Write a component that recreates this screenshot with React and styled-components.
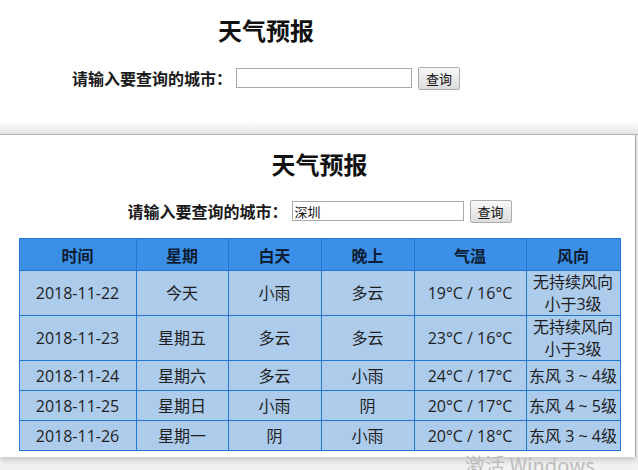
import React from "react";
import styled, { createGlobalStyle } from "styled-components";

const Global = createGlobalStyle`
  html, body { margin: 0; padding: 0; }
  body {
    background: #f1f1f1;
    font-family: "Noto Sans CJK SC", "Noto Sans", sans-serif;
    width: 638px;
    height: 470px;
    overflow: hidden;
    position: relative;
  }
`;

const TopWindow = styled.section`
  height: 135px;
  box-sizing: border-box;
  background: linear-gradient(to bottom, #ffffff 0, #ffffff 122px, #e4e4e4 134px);
  border-bottom: 1px solid #b9b9b9;
  padding-top: 14px;
`;

const TopInner = styled.div`
  width: 532px;
  display: flex;
  flex-direction: column;
  align-items: center;
  gap: 20px;
`;

const BottomWindow = styled.section`
  width: 636px;
  height: 322px;
  box-sizing: border-box;
  background: #ffffff;
  border-right: 1px solid #a8a8a8;
  box-shadow: 0 3px 6px rgba(0, 0, 0, 0.18);
  padding: 13px 0 0 4px;
  display: flex;
  flex-direction: column;
  align-items: center;
`;

const Title = styled.h1`
  margin: 0;
  font-size: 24px;
  line-height: 32px;
  font-weight: 700;
  color: #111;
  font-family: "Noto Sans CJK SC", sans-serif;
`;

const SearchRow = styled.form`
  display: flex;
  align-items: center;
  height: 24px;
  margin-top: ${(p) => p.$top || 0}px;
`;

const Label = styled.label`
  font-size: 16px;
  font-weight: 700;
  color: #1a1a1a;
  line-height: 22px;
  margin-right: 4px;
  white-space: nowrap;
`;

const CityInput = styled.input`
  width: ${(p) => p.$w}px;
  height: 20px;
  box-sizing: border-box;
  border: 1px solid #a9a9a9;
  padding: 0 2px;
  font-size: 13px;
  font-family: "Noto Sans CJK SC", sans-serif;
  color: #111;
  background: #fff;
  outline: none;
`;

const QueryButton = styled.button`
  margin-left: 6px;
  width: 42px;
  height: 23px;
  box-sizing: border-box;
  border: 1px solid #adadad;
  border-radius: 2px;
  background: linear-gradient(to bottom, #f7f7f7, #dcdcdc);
  font-size: 13px;
  font-family: "Noto Sans CJK SC", sans-serif;
  color: #111;
  padding: 0;
`;

const Table = styled.table`
  margin-top: 15px;
  width: 601px;
  border-collapse: collapse;
  table-layout: fixed;
  font-family: "Open Sans", "Noto Sans CJK SC", sans-serif;
  font-size: 16px;
`;

const HeadCell = styled.th`
  height: 31px;
  padding: 0;
  background: #3b8fe7;
  border: 1px solid #2078d0;
  color: #0d1d33;
  font-weight: 700;
  line-height: 22px;
  text-align: center;
  font-family: "Noto Sans CJK SC", sans-serif;
`;

const Cell = styled.td`
  height: 29px;
  padding: 0 1px;
  background: #adcbeb;
  border: 1px solid #2078d0;
  color: #1e1e1e;
  line-height: 22px;
  text-align: center;
  vertical-align: middle;
`;

const Watermark = styled.div`
  position: absolute;
  left: 465px;
  top: 450px;
  font-family: "Noto Sans CJK SC", "Noto Sans", sans-serif;
  font-size: 20px;
  color: #bdbdbd;
  white-space: nowrap;
`;

const columns = [
  { key: "date", title: "时间", w: 117 },
  { key: "week", title: "星期", w: 92 },
  { key: "day", title: "白天", w: 93 },
  { key: "night", title: "晚上", w: 93 },
  { key: "temp", title: "气温", w: 112 },
  { key: "wind", title: "风向", w: 94 },
];

const rows = [
  { date: "2018-11-22", week: "今天", day: "小雨", night: "多云", temp: "19°C / 16°C", wind: "无持续风向小于3级" },
  { date: "2018-11-23", week: "星期五", day: "多云", night: "多云", temp: "23°C / 16°C", wind: "无持续风向小于3级" },
  { date: "2018-11-24", week: "星期六", day: "多云", night: "小雨", temp: "24°C / 17°C", wind: "东风 3 ~ 4级" },
  { date: "2018-11-25", week: "星期日", day: "小雨", night: "阴", temp: "20°C / 17°C", wind: "东风 4 ~ 5级" },
  { date: "2018-11-26", week: "星期一", day: "阴", night: "小雨", temp: "20°C / 18°C", wind: "东风 3 ~ 4级" },
];

export default function App() {
  return (
    <>
      <Global />
      <TopWindow>
        <TopInner>
          <Title>天气预报</Title>
          <SearchRow onSubmit={(e) => e.preventDefault()}>
            <Label>请输入要查询的城市：</Label>
            <CityInput $w={176} defaultValue="" />
            <QueryButton type="button">查询</QueryButton>
          </SearchRow>
        </TopInner>
      </TopWindow>
      <BottomWindow>
        <Title>天气预报</Title>
        <SearchRow $top={19} onSubmit={(e) => e.preventDefault()}>
          <Label>请输入要查询的城市：</Label>
          <CityInput $w={172} defaultValue="深圳" />
          <QueryButton type="button">查询</QueryButton>
        </SearchRow>
        <Table>
          <colgroup>
            {columns.map((c) => (
              <col key={c.key} style={{ width: c.w }} />
            ))}
          </colgroup>
          <thead>
            <tr>
              {columns.map((c) => (
                <HeadCell key={c.key}>{c.title}</HeadCell>
              ))}
            </tr>
          </thead>
          <tbody>
            {rows.map((r) => (
              <tr key={r.date}>
                {columns.map((c) => (
                  <Cell key={c.key}>{r[c.key]}</Cell>
                ))}
              </tr>
            ))}
          </tbody>
        </Table>
      </BottomWindow>
      <Watermark>激活 Windows</Watermark>
    </>
  );
}
